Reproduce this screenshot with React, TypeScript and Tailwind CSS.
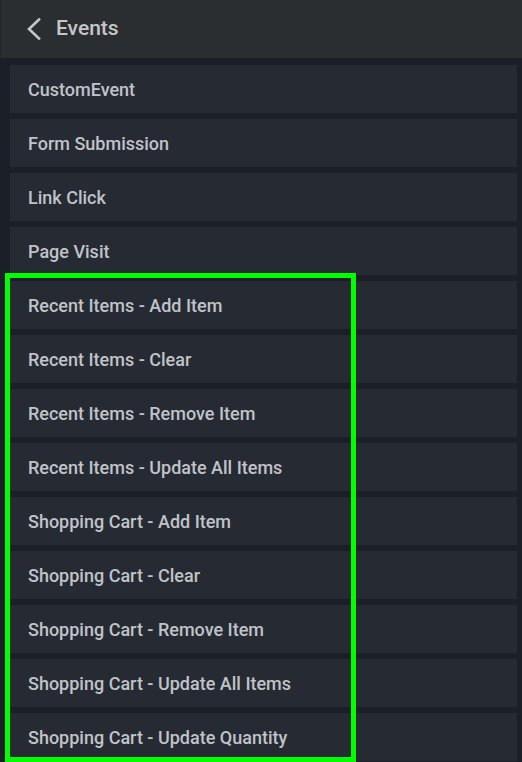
import React from "react";

const items = [
  "CustomEvent",
  "Form Submission",
  "Link Click",
  "Page Visit",
  "Recent Items - Add Item",
  "Recent Items - Clear",
  "Recent Items - Remove Item",
  "Recent Items - Update All Items",
  "Shopping Cart - Add Item",
  "Shopping Cart - Clear",
  "Shopping Cart - Remove Item",
  "Shopping Cart - Update All Items",
  "Shopping Cart - Update Quantity",
];

export default function App() {
  return (
    <div
      className="relative w-[522px] h-[762px] overflow-hidden bg-[#1b2028]"
      style={{ fontFamily: "Roboto, 'Liberation Sans', sans-serif" }}
    >
      <div className="h-[58px] bg-[#2b2e31] flex items-center pl-[24px] border-l border-[#22252a]">
        <svg width="16" height="22" viewBox="0 0 16 22" className="mr-[15px]">
          <path d="M14 1.5 L4 11 L14 20.5" stroke="#c4c6c9" strokeWidth="2.6" fill="none" strokeLinecap="square" />
        </svg>
        <span className="text-[21px] text-[#c4c6c9] font-medium">Events</span>
      </div>
      <div className="flex flex-col gap-[6px] pt-[7px] pl-[10px] pr-[5px]">
        {items.map((t) => (
          <div
            key={t}
            className="h-[48px] shrink-0 bg-[#252a33] flex items-center pl-[18px] text-[18px] font-medium text-[#c0c3c8]"
          >
            {t}
          </div>
        ))}
      </div>
      <div className="absolute left-[5px] top-[273px] w-[351px] h-[489px] border-[5px] border-[#00ff00] pointer-events-none" />
    </div>
  );
}
